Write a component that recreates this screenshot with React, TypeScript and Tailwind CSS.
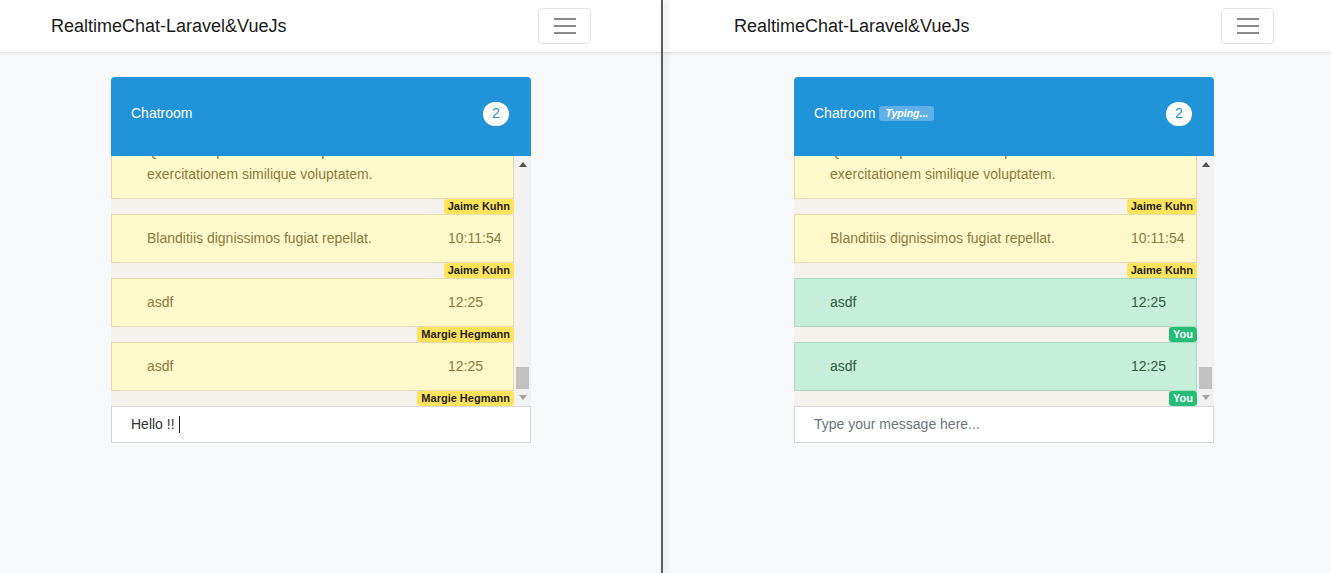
import React from 'react'

type Msg = {
  id: number
  lines: string[]
  time: string
  user: string
  mine: boolean
}

const leftMsgs: Msg[] = [
  { id: 1, lines: ['Quia aut repellendus eos explicabo', 'exercitationem similique voluptatem.'], time: '', user: 'Jaime Kuhn', mine: false },
  { id: 2, lines: ['Blanditiis dignissimos fugiat repellat.'], time: '10:11:54', user: 'Jaime Kuhn', mine: false },
  { id: 3, lines: ['asdf'], time: '12:25', user: 'Margie Hegmann', mine: false },
  { id: 4, lines: ['asdf'], time: '12:25', user: 'Margie Hegmann', mine: false },
]

const rightMsgs: Msg[] = [
  { id: 1, lines: ['Quia aut repellendus eos explicabo', 'exercitationem similique voluptatem.'], time: '', user: 'Jaime Kuhn', mine: false },
  { id: 2, lines: ['Blanditiis dignissimos fugiat repellat.'], time: '10:11:54', user: 'Jaime Kuhn', mine: false },
  { id: 3, lines: ['asdf'], time: '12:25', user: 'You', mine: true },
  { id: 4, lines: ['asdf'], time: '12:25', user: 'You', mine: true },
]

function Navbar({ offset }: { offset: string }) {
  return (
    <nav className="h-[53px] bg-white border-b border-[#e3e3e3] shadow-[0_1px_3px_rgba(0,0,0,0.08)] flex items-center">
      <div className={`${offset} w-[540px] shrink-0 flex items-center justify-between`}>
        <span className="text-[18px] text-[#1a1a1a]">RealtimeChat-Laravel&amp;VueJs</span>
        <button className="w-[53px] h-[36px] border border-[#e2e2e2] rounded-[4px] flex flex-col items-center justify-center gap-[5px]">
          <span className="block w-[22px] h-[2px] bg-[#8a8a8a]" />
          <span className="block w-[22px] h-[2px] bg-[#8a8a8a]" />
          <span className="block w-[22px] h-[2px] bg-[#8a8a8a]" />
        </button>
      </div>
    </nav>
  )
}

function Message({ msg }: { msg: Msg }) {
  const box = msg.mine
    ? 'bg-[#c6eedb] border-[#a9d9c0] text-[#2e5b3e]'
    : 'bg-[#fff9cc] border-[#e4dbac] text-[#8a7b3b]'
  const badge = msg.mine ? 'bg-[#26bd78] text-white' : 'bg-[#ffe35a] text-[#222]'
  return (
    <div className="shrink-0">
      <div className={`border ${box} flex py-[12px] text-[14px] leading-[23px]`}>
        <div className="w-[336px] shrink-0 pl-[35px]">
          {msg.lines.map((l, i) => (
            <div key={i}>{l}</div>
          ))}
        </div>
        <div className="flex-1">{msg.time}</div>
      </div>
      <div className="h-[15px] bg-[#f5f1ec] flex justify-end items-start">
        <span className={`${badge} h-[15px] leading-[15px] px-[4px] rounded-[3px] text-[11px] font-bold`}>
          {msg.user}
        </span>
      </div>
    </div>
  )
}

function Scrollbar() {
  return (
    <div className="w-[17px] shrink-0 bg-[#f1f1f1] flex flex-col">
      <div className="h-[17px] flex items-center justify-center">
        <svg width="8" height="5" viewBox="0 0 8 5">
          <polygon points="4,0 8,5 0,5" fill="#505050" />
        </svg>
      </div>
      <div className="flex-1 flex flex-col justify-end">
        <div className="h-[22px] mx-[2px] bg-[#c1c1c1]" />
      </div>
      <div className="h-[17px] flex items-center justify-center">
        <svg width="8" height="5" viewBox="0 0 8 5">
          <polygon points="0,0 8,0 4,5" fill="#a3a3a3" />
        </svg>
      </div>
    </div>
  )
}

function ChatCard({ msgs, typing, value }: { msgs: Msg[]; typing: boolean; value: string }) {
  return (
    <div className="w-[420px] mx-auto mt-[24px]">
      <div className="h-[79px] bg-[#2193d9] rounded-t-[4px] flex items-center justify-between pl-[20px] pr-[22px] pb-[6px]">
        <div className="flex items-center text-white text-[14px]">
          <span>Chatroom</span>
          {typing && (
            <span className="ml-[4px] h-[15px] leading-[15px] px-[6px] rounded-[3px] bg-[#5fb1e8] text-[10.5px] font-bold italic">
              Typing...
            </span>
          )}
        </div>
        <span className="w-[26px] h-[24px] rounded-full bg-white text-[#2193d9] text-[14px] flex items-center justify-center">
          2
        </span>
      </div>
      <div className="h-[250px] flex">
        <div className="flex-1 overflow-hidden flex flex-col justify-end">
          {msgs.map((m) => (
            <Message key={m.id} msg={m} />
          ))}
        </div>
        <Scrollbar />
      </div>
      <div className="h-[37px] bg-white border border-[#d3d8dd] flex items-center pl-[19px] text-[14px]">
        {value ? (
          <>
            <span className="text-[#333]">{value}</span>
            <span className="ml-[4px] w-px h-[17px] bg-[#222]" />
          </>
        ) : (
          <span className="text-[#6c757d]">Type your message here...</span>
        )}
      </div>
    </div>
  )
}

function Window({ msgs, typing, value, offset }: { msgs: Msg[]; typing: boolean; value: string; offset: string }) {
  return (
    <div className="h-full flex flex-col">
      <Navbar offset={offset} />
      <div className={`${offset} w-[540px]`}>
        <ChatCard msgs={msgs} typing={typing} value={value} />
      </div>
    </div>
  )
}

export default function App() {
  return (
    <div className="w-[1331px] h-[573px] flex bg-[#f8f9fb] overflow-hidden font-['Liberation_Sans',Arial,sans-serif]">
      <div className="w-[661px] shrink-0 h-full">
        <Window msgs={leftMsgs} typing={false} value="Hello !!" offset="ml-[51px]" />
      </div>
      <div className="relative z-10 w-[2px] shrink-0 h-full bg-[#5c5c5c] shadow-[3px_0_6px_rgba(0,0,0,0.18)]" />
      <div className="flex-1 h-full">
        <Window msgs={rightMsgs} typing={true} value="" offset="ml-[71px]" />
      </div>
    </div>
  )
}
